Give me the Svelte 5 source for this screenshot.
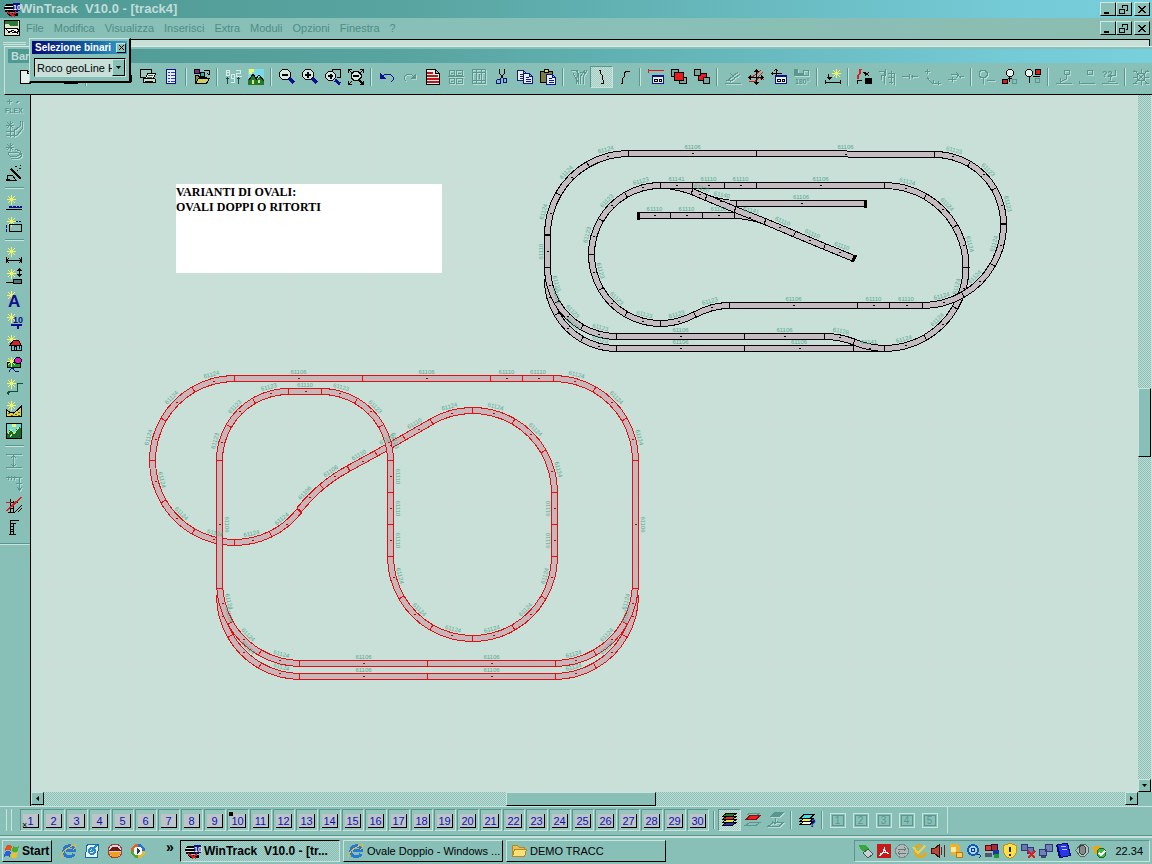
<script lang="ts">
  type Shape = { d?: string; fill: string; stroke?: string; w?: number; text?: string; x?: number; y?: number; size?: number };
  type Piece = { d: string; ticks: string; x: number; y: number; rot: number; label: string };

  const K = "#000";
  const NAVY = "#10108c";
  const PALE = "#e4f0ec";
  const DIM = "#5a968e";

  const s = (stroke: string, d: string, fill = "none", w = 1): Shape => ({ d, fill, stroke, w });
  const f = (fill: string, d: string): Shape => ({ d, fill });
  const t = (text: string, x: number, y: number, size: number, fill: string): Shape => ({ text, x, y, size, fill });

  const star = s("#f4f468", "M5.5 0v10M1 4.5h9M2 1l7 7M9 1l-7 7");
  const lens = [s(NAVY, "M10 9l5 5", "none", 3), s(K, "M3.500 .5h5l3 3v4l-3 3h-5l-3-3v-4z", "#d4e8e4", 1)];
  const page = (x: number, y: number, c = K) => s(c, `M${x + 0.5} ${y + 0.5}h6l3 3v7h-9zM${x + 6.5} ${y + 0.5}v3h3M${x + 2.5} ${y + 4.5}h3M${x + 2.5} ${y + 6.5}h5M${x + 2.5} ${y + 8.5}h5`, PALE);

  const icons: Record<string, Shape[]> = {
    blank: [s(K, "M3.5 1.500h7l3 3v10h-10zM10.500 1.500v3h3", PALE)],
    open: [s(K, "M1.500 4.500h5l1 2h6v7h-12z", "#a8a848")],
    save: [s(K, "M1.500 1.500h13v13h-13z", "#788838"), f(PALE, "M4 2h8v6H4z")],
    print: [s(K, "M4.500 6.500l1-5h8l-1 5M1.500 6.500h13v6h-13z", PALE), f(K, "M2 12h12v2H2z")],
    preview: [s(K, "M.5 .5h11v8H.5z", "#98c8c0"), s(K, "M5.500 9.500l2-5h8l-2 5z", PALE), s(K, "M3.500 9.500h11l1 1v3h-12z", "#c8e0d8"), s("#405850", "M8 6.500h5M7 8.500h5"), f(K, "M5 12h8v1H5z"), f("#e8e860", "M12 11h2v1h-2z")],
    list: [s(NAVY, "M3.500 .5h9v14h-9z", PALE, 1), s("#2838c8", "M5 3.500h2M8 3.500h4M5 6.500h2M8 6.500h4M5 9.500h2M8 9.500h4M5 12.500h2M8 12.500h4")],
    modules: [s(K, "M.5 .5h5v4h-5z", "#882080"), s(K, "M6.500 3.500h4v4h-4z", "#20b8b8"), s(K, "M10 1.500h5v4M13 4l2 2"), s(K, "M1.500 14.500v-8h3l1 2h7v2", "#909038"), s(K, "M1.500 14.500l3-5h11l-3 5z", "#d0d060")],
    tracks: [s("#d8ece8", "M1.500 1v5M4.500 1v5M1 1.500h4M1 3.500h4M1 6.500h4M11 1.500h5M15.500 1v3h-4v3h5", "none", 1), s("#204848", "M2.500 15V9M.5 10.500l2-2 2 2M13.500 15V9M11.500 10.500l2-2 2 2"), s("#d8ece8", "M6.500 5.500h3v8M6.500 5v4h3M6 13.500h3")],
    photo: [f("#78dce8", "M0 0h16v10H0z"), f("#f4f468", "M1 0h5v3H4v2H1z"), f("#207830", "M0 11l5-6 4 5 3-3 4 4v5H0z"), s(K, "M1 11l4-6 4 6M8 10l3-4 5 6"), f("#d8e870", "M4 11h2v4H4zM10 11h2v3h-2z")],
    zoomOut: [...lens, s(K, "M3 5.500h6", "none", 2)],
    zoomIn: [...lens, s(K, "M3 6h6M6 3v6", "none", 2)],
    zoomBox: [s(K, "M7.500 2V.5h8v8H12"), s(NAVY, "M10 11l5 4", "none", 3), s(K, "M3.500 2.500h4l3 3v3l-3 3h-4l-3-3v-3z", "#d4e8e4"), s(K, "M3 7h5M5.500 4.500v5", "none", 2)],
    zoomAll: [s(K, "M.5 4V.5H4M12 .5h3.500V4M.5 12v3.500H4M12 15.500h3.500V12M1 1l3 3M15 1l-3 3M1 15l3-3"), s(K, "M6 2.500h4l3 3v3l-3 3H6l-3-3v-3z", "#d4e8e4"), s(K, "M5 7h6M11 11l4 4", "none", 2)],
    undo: [s(NAVY, "M3 8l3-3h5l3 3v3l-2 2"), f(NAVY, "M1 4v6h6z")],
    redo: [s(DIM, "M12 8L9 5H5L2 8v2l2 2"), f(DIM, "M14 4v6H8z")],
    redDoc: [s(K, "M1.500 .5h9l4 4v11h-13zM10.500 .5v4h4", PALE), s("#c01818", "M2 4h6M2 7h11M2 10h12M2 13h12", "none", 2)],
    gridDoc: [s(DIM, "M1.500 1.500h5v5h-5zM8.500 1.500h6v5h-6zM1.500 9.500h5v5h-5zM8.500 9.500h6v5h-6zM0 7.500h16M3 4h2M10 4h3M3 12h2M10 12h3")],
    colDoc: [s(DIM, "M1.500 .5h13v14h-13zM2 3.500h12M2 11.500h12M5.500 1v14M10.500 1v14M8 5v5")],
    cut: [s(K, "M5.500 0v4l4 6M10.500 0v4l-4 6"), s(NAVY, "M3.500 10.500h3v4h-4v-3zM9.500 9.500h3v4h-3z", "none", 1)],
    copy: [page(0, 1, "#202060"), page(6, 4, NAVY)],
    paste: [s(K, "M.5 2.500h12v11H.5z", "#7c7c40"), s(K, "M4.500 .5h4v3h-4z", "#d8d870"), page(6, 5, NAVY)],
    fork: [s(DIM, "M0 1.500h5l2 3v10M2 4l5 9M7 1l-2 14M9 15V8l5-7M12 15V8l4-7M9 3h5")],
    bendLeft: [s(K, "M5 1.500h2M6.500 2v2l2 3v3l1 2v2.500M7 14.500h3")],
    bendRight: [s(K, "M4 14.500h2M5.500 14v-4l2-3V4l2-2h3")],
    trackWin: [s("#e01818", "M0 1.500h16M.5 0v4", "none", 1), s(NAVY, "M4.500 6.500h11v8h-11z", PALE), f(NAVY, "M4 6h12v2H4z"), s(K, "M6.500 10.500h3v2h-3zM11.500 10.500h2v2h-2z")],
    front: [s(K, "M.5 .5h7v7h-7z", "#78a8a0"), s(K, "M8.500 8.500h7v6h-7z", "#78a8a0"), s(K, "M3.500 3.500h9v8h-9z", "#f01818")],
    back: [s(K, "M4.500 4.500h8v7h-8z", "#f01818"), s(K, "M.5 .5h6v6h-6z", "#78a8a0"), s(K, "M9.500 8.500h6v6h-6z", "#78a8a0")],
    slope: [s(DIM, "M0 14.500h16M2 12l11-9M5 13l10-8M5 4l5 5M1 11h5")],
    moveTrack: [s("#e01818", "M1 7.500h4l8-6M1 12.500h6l4-4 5 2M9 9l6-6"), s(K, "M8.500 0v16M0 8.500h16"), f(K, "M6 3l2.500-3L11 3zM6 13l2.500 3 2.500-3zM3 6L0 8.500 3 11zM13 6l3 2.500L13 11z")],
    moveWin: [s(K, "M5.500 0v8M0 4.500h11M3 2l2-2 2 2M2 3L.5 4.500 2 6"), s(NAVY, "M4.500 6.500h11v8h-11z", PALE), f(NAVY, "M4 6h12v2H4z"), s(K, "M6.500 10.500h3v2h-3zM11.500 10.500h2v2h-2z")],
    rotate: [f(DIM, "M0 0h4v4h5v3H0z"), s(DIM, "M9.500 1.500h5v5h-5z"), t("180°", 1, 15, 7, DIM)],
    drop: [s(K, "M0 13.500h16M.5 11v4M15.500 11v4M3.500 5v4"), f(K, "M1 8h6l-3 3z"), s("#f4f468", "M11.500 0v9M7 4.500h9M8 1l7 7M15 1l-7 7")],
    redSwitch: [s("#e01818", "M1.500 10V7l2-3V1M3 .5h3"), s("#e01818", "M2.500 10V7l2-3V1"), s(K, "M1.500 15v-4h4M7 3l4 3M9 3l4 4M13 3L9 7"), f(K, "M9 9h7v6H9z")],
    switchOff: [s(DIM, "M0 2.500h5v4H2v4M7 0L5 15M9 4.500h6v11M9 8h6M10 13h4M12.500 2v13")],
    joint: [s(DIM, "M0 7.500h7M7.500 5v5M9 7.500h7M10.500 6v3")],
    chain: [s(DIM, "M2.500 0v5M0 2.500h5M2 8l2 3 3 3h9M8 11v4M13 12v4")],
    split: [s(DIM, "M0 10.500h8M4 8v5M3 5.500h6l4 3M8 3l3 3-3 3M12 7.500h4")],
    lamp: [s(DIM, "M2 1.500h4l2 2v3L6 8.500H2l-2-2v-3zM4.500 9v6M8 11.500h8")],
    lampA: [s(K, "M6.500 .5h3l2 2v3l-2 2h-3l-2-2v-3zM7.500 8v5", PALE), s(K, "M6 9.500h4"), s(K, "M.5 10.500h5v4h-5z", "#e01818"), s(DIM, "M10.500 10.500h4v4h-4z")],
    lampB: [s(K, "M2.500 .5h3l2 2v3l-2 2h-3l-2-2v-3zM4.500 8v6", PALE), s(K, "M8 7.500h7", "none"), s(K, "M10.500 .5h5v5h-5z", "#e01818"), s(DIM, "M10.500 9.500h4v4h-4z")],
    signal: [s(DIM, "M0 14.500h16M8.500 1.500h5v4h-5zM10 6v4l-6 3M4 9v5h5")],
    signalB: [s(DIM, "M0 14.500h16M8.500 1.500h5v4h-5zM.5 12v3")],
    ask: [t("?2", 0, 8, 9, DIM), s(DIM, "M0 14.500h16M13.500 1v5h-5v5M6 12h7")],
    target: [s(DIM, "M1 1l14 14M15 1L1 15M4.500 4.500h7v7h-7zM8 0v4M8 12v4M0 8h4M12 8h4M0 2h4M12 2h4M0 14h4M12 14h4")],
    flex: [s(DIM, "M3.500 0v5M1 2.500h5M10 4l3-2"), t("FLEX", -1, 14, 7, DIM)],
    bendTool: [s(DIM, "M4 0v8M0 4h8M1 1l6 6M7 1L1 7M0 10h8l6-5V0M0 14h11l5-6V0M4 8v8M8 8v8")],
    spiral: [s(DIM, "M4 0v8M0 4h8M1 1l6 6M7 1L1 7M3 9h8l4 2-4 2H4l-2-2zM5 15h8l3-2-2-5-5-2")],
    wand: [s(K, "M5 4l10 10", "none", 2), s(K, "M2 10l5 1 3 4H1zM9 1h2M13 3h2M11 5h1M14 0h1M0 14h4")],
    newTrack: [star, s(NAVY, "M3 11.500h13", "none", 2), s("#88c0b8", "M6.500 10v2M10.500 10v2M13.500 10v2"), s(K, "M0 14.500h16")],
    newBox: [star, s(K, "M3.500 7.500h12v7h-12z"), s(NAVY, "M10 4.500h2M13 4.500h2M.5 8v3M.5 12v3")],
    newDim: [star, s(K, "M.5 10v6M15.500 10v6M1 13.500h14M3 11l-2 2.500L3 16M13 11l2 2.500-2 2.500")],
    newHeight: [star, s(K, "M13.500 0v7M11.500 2l2-2 2 2M11.500 5l2 2 2-2M0 13.500h7"), s(K, "M7.500 10.500h8v4h-8z", "#507870")],
    newText: [star, { ...t("A", 2, 16, 17, NAVY) }],
    newNumber: [star, t("10", 7, 10, 9, NAVY), s(NAVY, "M5 11.500h11M11.500 11v5", "none", 2)],
    newHouse: [star, f("#60c8d8", "M5 10h10v5H5z"), s(K, "M5.500 10v5h10v-5M8 15v-4h2v4M13 11v3"), s(K, "M3.500 10.500l4-5h5l3 5z", "#e02020")],
    newTree: [s(K, "M1.500 5.500h13v5h-13z", "#189830"), star, s(K, "M10.500 .5h3l2 2v2l-2 2h-3l-2-2v-2z", "#d820c0"), s(NAVY, "M3 15l3-5 3 4h4")],
    newPath: [star, s("#105030", "M2.500 15v-3h9V4h5M1 13l1.500 2L4 13", "none", 1)],
    newHill: [star, s(K, "M.5 15.500V9l3 2 4 1 4-3 4-4v10.500z", "#e0d050"), s("#606018", "M2 12h2M5 14h2M9 13h2M12 11h2M12 14h2")],
    picture: [s(K, "M.5 .5h15v15H.5z", "#70d8d8"), f("#f4f468", "M6 1h4v3H6z"), f("#186830", "M1 11l4-6 3 5 5-7 2 3v9H1z"), s("#c8e870", "M2 11l3-5 3 5M8 11l5-7M4 14l2-3")],
    vDim: [s(DIM, "M0 1.500h16M0 14.500h16M7.500 3v10M5 5l2.500-2L10 5M5 11l2.500 2 2.500-2")],
    railDim: [s(DIM, "M0 2.500h16M2 1v4M5 1v4M8 1v4M13.500 3v11M11 12l2.500 3 2.500-3M10 8h6")],
    noPillar: [s(K, "M4.500 2v13M7.500 4v11M4 5.500h8M4 8.500h3M4 11.500h3M2 15.500h7M9 15l7-7M12 15l4-4"), s("#e01818", "M0 14L15 0M1 14L16 0M0 5h5", "none")],
    pillar: [s(K, "M4.500 1v14M7.500 4v11M4 1.500h9M4 4.500h6M3 15.500h7M4 7.500h3M4 10.500h3M4 12.500h3", "none", 1)],
    layers: [s(K, "M1 13l4-3h10l-4 3z", "#2030c0"), s(K, "M1 10l4-3h10l-4 3z", "#e8e050"), s(K, "M1 7l4-3h10l-4 3z", "#e03020"), s(K, "M1 4l4-3h10l-4 3z", "#208030")],
    redLayer: [s(DIM, "M0 13.500h11l4-3H5zM2 3l3-2h10l-3 2"), s("#881010", "M1 7.500l4-4h10l-4 4z", "#f02020")],
    dimLayer: [f(DIM, "M1 5l5-5h10l-4 5z"), s(DIM, "M7 6v5M4 9l3 3 3-3M0 14.500h11l4-4H5z")],
    askLayer: [s(K, "M1 12.500l4-3h9l-3 3z", "#f8f8f0"), s(K, "M1 9.500l4-3h9l-3 3z", "#f0f040"), s(K, "M1 6.500l4-4h10l-4 4z", "#40e0e8"), t("?", 10, 15, 11, NAVY)],
    app: [f(K, "M2 3h13v2H1zM0 6h15v2H0zM1 9h13v2H1zM3 12h11v3H5z"), s(PALE, "M1 5.500h8M1 8.500h8"), f(NAVY, "M9 2h7v8H9z"), t("10", 9, 9, 7, "#fff"), s("#e01818", "M3 11l8 4M7 15l5-4", "none", 2)],
    doc: [s(K, "M.5 .5h15v15H.5z", "#dce8c8"), f("#287838", "M1 1h13v5H7L4 4H1z"), s(K, "M2 8h11l2 3-3 2-8-2-3-3M4 13l5-3 5 4", "#fff")],
    flag: [f("#e85020", "M1 3q3-2 6 0L6 8q-3-2-6 0z"), f("#48b028", "M8 3q3 2 6 0l-1 5q-3 2-6 0z"), f("#2860d8", "M0 9q3-2 6 0l-1 5q-3-2-6 0z"), f("#f0c020", "M7 9q3 2 6 0l-1 5q-3 2-6 0z")],
    ie: [s("#2878d0", "M13 11a5.500 5.500 0 1 1 .5-4H5", "none", 3), s("#f0b828", "M1 15q-2-5 6-10t8-2q0 2-3 4", "none", 1)],
    desk: [s("#1868a8", "M3.500 1.500h11l-1 13h-12l1-11z", "#e8f4f8", 1), s("#2888c8", "M5 8a3 3 0 1 0 6 0a3 3 0 1 0-6 0M7 9l6-7", "none", 2)],
    fire: [s("#a04030", "M1 8a7 7 0 1 1 14 0a7 7 0 1 1-14 0z", "#c8d8f0"), f("#781808", "M2 8q6-9 12 0z"), f("#f0a020", "M2 9h12q-1 5-6 5T2 9z")],
    media: [f("#e86020", "M8 1A7 7 0 0 0 1 8h7z"), f("#50a830", "M8 15A7 7 0 0 1 1 8h7z"), f("#f0b828", "M8 15A7 7 0 0 0 15 8H8z"), f("#2870d0", "M8 1a7 7 0 0 1 7 7H8z"), f("#f8f8f8", "M8 3.500a4.500 4.500 0 1 0 .1 0z"), f("#183868", "M7 5l4 3-4 3z")],
    folder: [s("#b88820", "M1.500 13.500v-11h5l2 2h5v3", "#e8c050"), s("#b88820", "M1.500 13.500l2-7h12l-2 7z", "#f8e078")],
    usb: [f("#38a838", "M1 2h6l4 4-3 4-6-4z"), s("#405850", "M5 10l5-4 5 5-5 4z", "#c8d0d0")],
    acrobat: [f("#c81818", "M1 1h14v14H1z"), s("#fff", "M3 13q6-3 5-10M4 11q5-3 9 0M8 5q1 4 5 6")],
    sync: [s("#788888", "M1.500 8a6.500 6.500 0 1 1 13 0a6.500 6.500 0 1 1-13 0z", "#b0b8b8"), s("#687878", "M4 6h7M5 10h7M10 4l2 2-2 2M6 8l-2 2 2 2")],
    ring: [s("#e8a818", "M9 2.500a5.500 5.500 0 1 0 5 7", "none", 3), s("#f0d040", "M1 4l5 6 7-7", "none", 2)],
    sound: [s("#401008", "M1.500 5.500h3l5-4v13l-5-4h-3z", "#b84838"), s("#702018", "M11.500 4v8M14.500 2v12")],
    key: [f("#f0b028", "M2 1h8l2 3v8H3z"), f("#f8e8a8", "M3 4h5v5H3z"), s("#c07810", "M8 9h6v5H8z", "#f0d060")],
    at: [s("#1858b8", "M2 7a5 5 0 1 1 10 0a5 5 0 1 1-10 0z", "#a8d8f0", 2), s("#103888", "M5 7a2 2 0 1 0 4 0a2 2 0 1 0-4 0M11 11q3 0 4 2l-2 2")],
    netRed: [s("#600808", "M1.500 2.500h6v5h-6z", "#d83838"), s("#201040", "M7.500 1.500h6v6h-6z", "#b02828"), f("#1838a8", "M9 7h6v5H9z"), f("#209838", "M10 11h5v4h-5z"), f("#505870", "M1 10h7v4H1z")],
    shield: [s("#c89010", "M8 .5l6.500 2v6q-1 5-6.500 7-5.500-2-6.500-7v-6z", "#f8e048"), s("#302000", "M8 4v5M8 11v2", "none", 2)],
    netOff: [s("#303878", "M1.500 1.500h6v6h-6zM7.500 4.500h6v6h-6z", "#6878b0"), s("#e02020", "M8 8l7 7M15 8l-7 7", "none", 2)],
    net: [s("#303878", "M7.500 1.500h7v7h-7zM1.500 6.500h7v6h-7z", "#7080b8"), f("#404868", "M3 13h5v2H3z")],
    tablet: [s("#080868", "M1.500 1.500l10-1 3 12-10 2z", "#2838e8"), f("#080868", "M0 2h2l3 13H3z"), s("#b0c0ff", "M5 4l5-1M6 7l5-1")],
    volume: [s("#586464", "M1.500 7.500l5-6h5l3 3v5l-4 4h-4z", "#b8c0c0"), s("#384040", "M6 7a3 3 0 1 0 5 0a3 3 0 1 0-5 0", "#808c8c")],
    check: [f("#e8a818", "M1 3h6l5 5-3 6-7-4z"), s("#186820", "M5 10a4.500 4.500 0 1 1 9 0a4.500 4.500 0 1 1-9 0z", "#40b848"), s("#fff", "M7 10l2 2 4-4", "none", 2)],
  };

  const off = new Set(["redo", "gridDoc", "colDoc", "fork", "slope", "rotate", "switchOff", "joint", "chain", "split", "lamp", "signal", "signalB", "ask", "target", "flex", "bendTool", "spiral", "vDim", "railDim", "dimLayer"]);

  const toolbar = "blank open save | x1 print preview list | modules | tracks photo | zoomOut zoomIn zoomBox zoomAll | undo redo redDoc gridDoc colDoc cut copy paste | fork bendLeft bendRight | trackWin front back | slope moveTrack moveWin rotate | drop | redSwitch switchOff joint chain split | lamp lampA lampB | signal signalB ask | target".split(" ");
  const sidebar = "flex bendTool spiral wand | newTrack newBox | newDim newHeight newText newNumber newHouse newTree newPath newHill picture | vDim railDim noPillar pillar".split(" ");
  const tray = "usb acrobat sync ring sound key at netRed shield netOff net tablet volume check".split(" ");
  const menus = ["File", "Modifica", "Visualizza", "Inserisci", "Extra", "Moduli", "Opzioni", "Finestra", "?"];
  const layerNumbers = Array.from({ length: 30 }, (_, i) => i + 1);

  // Track pieces: every piece keeps its path, end joints and label anchor.
  const joint = (x: number, y: number, a: number) => {
    const nx = -Math.sin(a) * 3.5;
    const ny = Math.cos(a) * 3.5;
    return `M${x - nx} ${y - ny}L${x + nx} ${y + ny}`;
  };

  const upright = (a: number) => {
    let deg = (a * 180) / Math.PI;
    while (deg > 90) deg -= 180;
    while (deg <= -90) deg += 180;
    return Math.round(deg);
  };

  function line(x1: number, y1: number, x2: number, y2: number, label = ""): Piece[] {
    const a = Math.atan2(y2 - y1, x2 - x1);
    return [{
      d: `M${x1} ${y1}L${x2} ${y2}`,
      ticks: joint(x1, y1, a) + joint(x2, y2, a),
      x: (x1 + x2) / 2, y: (y1 + y2) / 2, rot: upright(a), label,
    }];
  }

  function arc(cx: number, cy: number, r: number, from: number, to: number, n: number, label: string): Piece[] {
    const at = (deg: number) => [cx + r * Math.cos((deg * Math.PI) / 180), cy + r * Math.sin((deg * Math.PI) / 180)];
    const step = (to - from) / n;
    return Array.from({ length: n }, (_, i) => {
      const a = from + i * step;
      const [x1, y1] = at(a);
      const [x2, y2] = at(a + step);
      const [x, y] = at(a + step / 2);
      const rad = (deg: number) => ((deg + 90) * Math.PI) / 180;
      return {
        d: `M${x1} ${y1}A${r} ${r} 0 0 ${step > 0 ? 1 : 0} ${x2} ${y2}`,
        ticks: joint(x1, y1, rad(a)) + joint(x2, y2, rad(a + step)),
        x, y, rot: upright(rad(a + step / 2)), label,
      };
    });
  }

  function bend(x1: number, y1: number, qx: number, qy: number, x2: number, y2: number, label = ""): Piece[] {
    const p = line(x1, y1, x2, y2, label)[0];
    p.d = `M${x1} ${y1}Q${qx} ${qy} ${x2} ${y2}`;
    p.x = (x1 + 2 * qx + x2) / 4;
    p.y = (y1 + 2 * qy + y2) / 4;
    return [p];
  }

  // Vertical pieces whose label reads bottom to top.
  const leftward = (pieces: Piece[]) => pieces.map((p) => ({ ...p, rot: -90 }));

  const blackLayout = [
    ...arc(616.5, 279.5, 69, 180, 90, 3, "61123"),
    ...arc(616.5, 267.5, 69, 180, 90, 3, "61123"),
    ...arc(628.5, 234.5, 81, 180, 270, 3, "61124"),
    ...line(628.5, 153.5, 756.5, 153.5, "61106"),
    ...line(756.5, 153.5, 934.5, 154.5, "61106"),
    ...arc(934.5, 223.5, 69, -90, 0, 3, "61123"),
    ...arc(884.5, 267, 81.5, -90, 90, 6, "61124"),
    ...arc(922.5, 224.5, 81, 0, 90, 3, "61124"),
    ...leftward(line(547.5, 267.5, 547.5, 235.5, "61110")),
    ...line(616.5, 336.5, 744.5, 336.5, "61106"),
    ...line(744.5, 336.5, 824.5, 336.5, "61106"),
    ...line(616.5, 348.5, 744.5, 348.5, "61106"),
    ...line(744.5, 348.5, 853.5, 348.5, "61106"),
    ...line(853.5, 348.5, 884.5, 348.5, "61141"),
    ...bend(824.5, 336.5, 840, 336.5, 854, 342, "61128"),
    ...bend(854, 342, 868, 348, 884.5, 348.5),
    ...arc(660.5, 254.5, 69, 60, 270, 7, "61123"),
    ...arc(729.5, 374.5, 69, -120, -90, 1, "61123"),
    ...line(729.5, 305.5, 857.5, 305.5, "61106"),
    ...line(857.5, 305.5, 889.5, 305.5, "61110"),
    ...line(889.5, 305.5, 922.5, 305.5, "61110"),
    ...bend(667, 185.5, 680, 187, 692, 191.5),
    ...line(660.5, 185.5, 692.5, 185.5, "61141"),
    ...line(692.5, 185.5, 724.5, 185.5, "61110"),
    ...line(724.5, 185.5, 756.5, 185.5, "61110"),
    ...line(756.5, 185.5, 884.5, 185.5, "61106"),
    ...line(692, 191.5, 706, 197.5, "61120"),
    ...bend(706, 197.5, 720, 203, 736.5, 203.5, "61140"),
    ...line(736.5, 203.5, 865.5, 203.5, "61106"),
    ...line(638.5, 215.5, 670.5, 215.5, "61110"),
    ...line(670.5, 215.5, 702.5, 215.5, "61110"),
    ...line(702.5, 215.5, 734.5, 215.5, "61110"),
    ...bend(734.5, 215.5, 750, 216, 765, 221.5, "61141"),
    ...line(706, 197.5, 735, 209.5),
    ...line(735, 209.5, 765, 221.5),
    ...line(765, 221.5, 794.5, 234, "61110"),
    ...line(794.5, 234, 824.5, 246.5, "61110"),
    ...line(824.5, 246.5, 854, 258.5, "61110"),
  ];

  const redLayout = [
    ...arc(234.5, 460.5, 82, 38, 90, 2, "61124"),
    ...arc(234.5, 460.5, 82, 90, 270, 6, "61124"),
    ...arc(421, 605, 154.5, -142, -118, 2, "61106"),
    ...line(348.5, 468.5, 376, 453.5, "61110"),
    ...line(376, 453.5, 404, 437.5, "61110"),
    ...line(404, 437.5, 432, 421.5, "61110"),
    ...arc(472.5, 492.5, 82, -120, 0, 4, "61124"),
    ...leftward(line(554.5, 492.5, 554.5, 524.5, "61110")),
    ...leftward(line(554.5, 524.5, 554.5, 556.5, "61110")),
    ...arc(472.5, 556.5, 82, 0, 180, 6, "61124"),
    ...line(390.5, 460.5, 390.5, 492.5, "61110"),
    ...line(390.5, 492.5, 390.5, 524.5, "61110"),
    ...line(390.5, 524.5, 390.5, 556.5, "61110"),
    ...arc(321.5, 460.5, 69, -90, 0, 3, "61123"),
    ...line(288.5, 391.5, 321.5, 391.5, "61110"),
    ...arc(288.5, 460.5, 69, 180, 270, 3, "61123"),
    ...line(234.5, 378.5, 362.5, 378.5, "61106"),
    ...line(362.5, 378.5, 490.5, 378.5, "61106"),
    ...line(490.5, 378.5, 522.5, 378.5, "61110"),
    ...line(522.5, 378.5, 553.5, 378.5, "61110"),
    ...arc(553.5, 460.5, 82, -90, 0, 3, "61124"),
    ...arc(300.5, 595.5, 81, 90, 180, 3, "61124"),
    ...arc(300.5, 582.5, 81, 90, 180, 3, "61124"),
    ...arc(554.5, 595.5, 81, 0, 90, 3, "61124"),
    ...arc(554.5, 582.5, 81, 0, 90, 3, "61124"),
    ...line(219.5, 460.5, 219.5, 588.5, "61106"),
    ...line(635.5, 460.5, 635.5, 588.5, "61106"),
    ...line(299.5, 663.5, 427.5, 663.5, "61106"),
    ...line(427.5, 663.5, 555.5, 663.5, "61106"),
    ...line(299.5, 676.5, 427.5, 676.5, "61106"),
    ...line(427.5, 676.5, 555.5, 676.5, "61106"),
  ];

  const layouts = [
    { name: "black", pieces: blackLayout },
    { name: "red", pieces: redLayout },
  ];

  let activeLayer = $state(10);
</script>

{#snippet icon(name: string)}
  <svg class={["icon", off.has(name) && "off"]} viewBox="0 0 16 16" aria-hidden="true">
    {#each icons[name] ?? [] as shape}
      {#if shape.text}
        <text x={shape.x} y={shape.y} font-size={shape.size} fill={shape.fill}>{shape.text}</text>
      {:else}
        <path d={shape.d} fill={shape.fill} stroke={shape.stroke ?? "none"} stroke-width={shape.w ?? 1} />
      {/if}
    {/each}
  </svg>
{/snippet}

{#snippet windowButtons()}
  <div class="window-buttons">
    <button aria-label="Riduci"><svg viewBox="0 0 11 9"><path d="M2 8h5" stroke-width="2" /></svg></button>
    <button aria-label="Ripristina"><svg viewBox="0 0 11 9"><path d="M4 .5h5M4.500 0v3M9.500 0v5.500H8M2 4h5M1.500 3.500v5h5v-5" /></svg></button>
    <button class="close" aria-label="Chiudi"><svg viewBox="0 0 11 9"><path d="M2 1l7 7M9 1L2 8M3 1l7 7M10 1L3 8" /></svg></button>
  </div>
{/snippet}

<div class="app">
  <header class="titlebar">
    {@render icon("app")}
    <h1>WinTrack&nbsp; V10.0 - [track4]</h1>
    {@render windowButtons()}
  </header>

  <nav class="menubar">
    {@render icon("doc")}
    {#each menus as menu}
      <button>{menu}</button>
    {/each}
    {@render windowButtons()}
  </nav>

  <div class="dock">
    <span class="dock-grip"></span>
    <span class="dock-strip"></span>
  </div>

  <section class="toolbar">
    <div class="toolbar-title">Barra</div>
    <div class="tools">
      {#each toolbar as name}
        {#if name === "|"}
          <span class="sep"></span>
        {:else}
          <button class={["tool", name === "bendLeft" && "pressed"]} aria-label={name}>{@render icon(name)}</button>
        {/if}
      {/each}
    </div>
  </section>

  <main>
    <aside class="sidebar">
      {#each sidebar as name}
        {#if name === "|"}
          <span class="hsep"></span>
        {:else}
          <button aria-label={name}>{@render icon(name)}</button>
        {/if}
      {/each}
      <span class="side-end"></span>
    </aside>

    <div class="workspace">
      <div class="view">
        <svg class="plan" role="img" aria-label="track4">
          <defs>
            <pattern id="grid" width="80" height="80" patternUnits="userSpaceOnUse" x="53" y="104">
              <path d="M0 .5h80M.5 0v80" stroke="#d2dad4" fill="none" />
            </pattern>
          </defs>
          <g transform="translate(-31 -95)">
            <rect x="31" y="95" width="100%" height="100%" fill="url(#grid)" />
            <rect x="176" y="184" width="266" height="89" fill="#fff" />
            <text class="note" x="176" y="196">VARIANTI DI OVALI:</text>
            <text class="note" x="176" y="211">OVALI DOPPI O RITORTI</text>
            {#each layouts as layout}
              <g class={["layout", layout.name]}>
                {#each layout.pieces as piece}
                  <path class="rail" d={piece.d} />
                  <path class="bed" d={piece.d} />
                  <path class="joint" d={piece.ticks} />
                {/each}
                {#each layout.pieces as piece}
                  {#if piece.label}
                    <rect class="dot" x={Math.floor(piece.x)} y={Math.floor(piece.y)} width="2" height="1" />
                    <text class="label" text-anchor="middle" transform="translate({piece.x} {piece.y}) rotate({piece.rot})" y="-5">{piece.label}</text>
                  {/if}
                {/each}
              </g>
            {/each}
            <path class="buffer" d="M638 212v8M865 200v8M856 255l-4 7" />
          </g>
        </svg>
        <div class="scroll-v">
          <span class="before"></span>
          <span class="thumb"></span>
          <span class="after"></span>
          <button aria-label="Scorri in basso"><svg viewBox="0 0 7 7"><path d="M1 2h5L3.500 5z" /></svg></button>
        </div>
      </div>
      <div class="scroll-h">
        <button aria-label="Scorri a sinistra"><svg viewBox="0 0 7 7"><path d="M5 1v5L2 3.500z" /></svg></button>
        <span class="before"></span>
        <span class="thumb"></span>
        <span class="after"></span>
        <button aria-label="Scorri a destra"><svg viewBox="0 0 7 7"><path d="M2 1v5l3-2.500z" /></svg></button>
        <span class="corner"></span>
      </div>
    </div>
  </main>

  <section class="layerbar">
    <span class="grip"></span>
    {#each layerNumbers as n}
      <button class="layer" onclick={() => (activeLayer = n)}>
        <span>{n}</span>
        {#if n === activeLayer}<i class="current"></i>{/if}
        {#if n === 1}<i class="crossed">×</i>{/if}
      </button>
    {/each}
    <span class="sep"></span>
    <button class="tool pressed" aria-label="layers">{@render icon("layers")}</button>
    <button class="tool" aria-label="redLayer">{@render icon("redLayer")}</button>
    <button class="tool" aria-label="dimLayer">{@render icon("dimLayer")}</button>
    <span class="sep"></span>
    <button class="tool" aria-label="askLayer">{@render icon("askLayer")}</button>
    <span class="sep"></span>
    {#each [1, 2, 3, 4, 5] as n}
      <button class="tool"><span class="preset">{n}</span></button>
    {/each}
    <span class="bar-end"></span>
  </section>

  <footer class="taskbar">
    <button class="start">{@render icon("flag")}Start</button>
    <div class="quick">
      {#each ["ie", "desk", "fire", "media"] as name}
        <button aria-label={name}>{@render icon(name)}</button>
      {/each}
    </div>
    <button class="more" aria-label="Altro">»</button>
    <button class="task active">{@render icon("app")}<span>WinTrack&nbsp; V10.0 - [tr...</span></button>
    <button class="task">{@render icon("ie")}<span>Ovale Doppio - Windows ...</span></button>
    <button class="task">{@render icon("folder")}<span>DEMO TRACC</span></button>
    <div class="tray">
      {#each tray as name}
        {@render icon(name)}
      {/each}
      <time>22.34</time>
    </div>
  </footer>

  <div class="palette">
    <div class="palette-title">
      <label for="system">Selezione binari</label>
      <button aria-label="Chiudi selezione"><svg viewBox="0 0 7 7"><path d="M1 1l5 5M6 1L1 6" /></svg></button>
    </div>
    <div class="combo">
      <select id="system"><option>Roco geoLine H0</option></select>
      <span class="arrow"><svg viewBox="0 0 7 7"><path d="M1 2h5L3.500 5z" /></svg></span>
    </div>
  </div>
</div>

<style>
  :global(body) {
    background: #88c0b8;
  }

  .app {
    --face: #88c0b8;
    --light: #c8e4dc;
    --dark: #5a968e;
    --paper: #c8e0d8;
    --title: linear-gradient(90deg, #509a94, #58a4a0 35%, #74cad6 88%, #78d0dc);
    --dither: repeating-conic-gradient(#88c0b8 0 25%, #c0dcd4 0 50%) 0 0 / 2px 2px;
    position: relative;
    display: flex;
    flex-direction: column;
    height: 100vh;
    overflow: hidden;
    background: var(--face);
    font: 11px/14px "Liberation Sans", Arial, sans-serif;
    color: #000;
  }

  button {
    box-sizing: border-box;
    margin: 0;
    padding: 0;
    border: 0;
    background: none;
    color: inherit;
    font: inherit;
  }

  .icon {
    display: block;
    flex: none;
    width: 16px;
    height: 16px;
    overflow: visible;
    shape-rendering: crispEdges;
  }

  .icon text {
    font-family: "Liberation Sans", Arial, sans-serif;
    font-weight: bold;
  }

  .icon.off {
    filter: drop-shadow(1px 1px 0 #b8dcd4);
  }

  .titlebar,
  .menubar {
    display: flex;
    align-items: center;
    flex: none;
    padding: 0 2px 0 4px;
  }

  .titlebar {
    height: 18px;
    background: var(--title);
  }

  .titlebar h1 {
    margin: 0;
    color: #c0dcd8;
    font-size: 13px;
    font-weight: bold;
  }

  .menubar {
    height: 20px;
    background: linear-gradient(90deg, #88c0b8 50%, #8cbcb0);
  }

  .menubar > button {
    margin-left: 10px;
    color: #508c84;
  }

  .menubar > .icon + button {
    margin-left: 6px;
  }

  .window-buttons {
    display: flex;
    margin-left: auto;
  }

  .window-buttons button {
    width: 16px;
    height: 14px;
    padding: 1px;
    border: 1px solid;
    border-color: #d0e8e0 #000 #000 #d0e8e0;
    background: var(--face);
  }

  .window-buttons .close {
    margin-left: 2px;
  }

  .window-buttons svg {
    display: block;
    width: 11px;
    height: 9px;
    fill: none;
    stroke: #000;
    shape-rendering: crispEdges;
  }

  .dock {
    display: flex;
    flex: none;
    align-items: flex-end;
    height: 8px;
    padding-right: 2px;
  }

  .dock-grip {
    width: 23px;
    height: 1px;
    margin: 0 4px 1px 3px;
    border-top: 1px solid var(--light);
    border-bottom: 1px solid var(--light);
  }

  .dock-strip {
    flex: 1;
    height: 6px;
    border-top: 1px solid #000;
    border-right: 1px solid #000;
    background: var(--paper);
  }

  .toolbar {
    box-sizing: border-box;
    flex: none;
    height: 49px;
    margin-left: 4px;
    padding: 2px 0 0 3px;
    border-top: 1px solid #d8ece4;
    border-left: 1px solid var(--light);
    border-bottom: 1px solid #000;
  }

  .toolbar-title {
    height: 14px;
    padding-left: 3px;
    background: var(--title);
    color: #c0dcd8;
    font-weight: bold;
  }

  .tools {
    display: flex;
    align-items: center;
    height: 28px;
    padding-left: 5px;
  }

  .tool {
    display: grid;
    place-items: center;
    flex: none;
    width: 23px;
    height: 22px;
    border: 1px solid transparent;
  }

  .tool.pressed {
    border-color: var(--dark) var(--light) var(--light) var(--dark);
    background: repeating-conic-gradient(#a0ccc4 0 25%, #c8e0d8 0 50%) 0 0 / 2px 2px;
  }

  .sep {
    flex: none;
    box-sizing: border-box;
    width: 2px;
    height: 18px;
    margin: 0 3px;
    border-left: 1px solid var(--dark);
    border-right: 1px solid var(--light);
  }

  main {
    display: flex;
    flex: 1;
    min-height: 0;
  }

  .sidebar {
    display: flex;
    flex-direction: column;
    flex: none;
    width: 30px;
    padding-top: 1px;
  }

  .sidebar button {
    display: grid;
    place-items: center;
    height: 22px;
    padding-right: 2px;
  }

  .hsep,
  .side-end {
    flex: none;
    margin: 3px 6px 3px 5px;
    border-top: 1px solid var(--dark);
    border-bottom: 1px solid var(--light);
  }

  .side-end {
    margin: 5px 0 0;
  }

  .workspace {
    display: flex;
    flex-direction: column;
    flex: 1;
    min-width: 0;
    border-left: 1px solid #000;
  }

  .view {
    display: flex;
    flex: 1;
    min-height: 0;
    background: var(--paper);
  }

  .plan {
    display: block;
    flex: 1;
    min-width: 0;
    height: 100%;
  }

  .note {
    font: bold 12px "Liberation Serif", "Times New Roman", serif;
  }

  .layout path,
  .buffer {
    fill: none;
    shape-rendering: crispEdges;
  }

  .layout .rail {
    stroke-width: 7px;
  }

  .layout .bed {
    stroke: #c4bcc0;
    stroke-width: 5px;
  }

  .black .rail,
  .black .joint {
    stroke: #000;
  }

  .red .rail,
  .red .joint {
    stroke: #e01010;
  }

  .red .bed {
    stroke: #c8b6ba;
  }

  .red .dot {
    fill: #b00808;
  }

  .label {
    fill: #58a890;
    font: 6px "Liberation Sans", Arial, sans-serif;
  }

  .buffer {
    stroke: #000;
    stroke-width: 3px;
  }

  .scroll-v,
  .scroll-h {
    display: flex;
    flex: none;
    background: var(--dither);
  }

  .scroll-v {
    flex-direction: column;
    width: 13px;
    margin-right: 1px;
  }

  .scroll-h {
    height: 14px;
  }

  .scroll-v .before {
    flex: 293;
  }

  .scroll-v .thumb {
    flex: 67;
  }

  .scroll-v .after {
    flex: 322;
  }

  .scroll-h .before {
    flex: 462;
  }

  .scroll-h .thumb {
    flex: 149;
  }

  .scroll-h .after {
    flex: 469;
  }

  .corner {
    width: 14px;
    background: var(--face);
  }

  .thumb,
  .scroll-v button,
  .scroll-h button {
    box-sizing: border-box;
    border: 1px solid;
    border-color: var(--light) #000 #000 var(--light);
    background: var(--face);
  }

  .scroll-v button,
  .scroll-h button {
    display: grid;
    place-items: center;
    width: 13px;
    height: 13px;
  }

  .scroll-v svg,
  .scroll-h svg,
  .arrow svg {
    width: 7px;
    height: 7px;
  }

  .layerbar {
    display: flex;
    align-items: center;
    flex: none;
    box-sizing: border-box;
    height: 30px;
    padding-bottom: 2px;
    border-top: 1px solid var(--light);
    border-bottom: 1px solid var(--dark);
  }

  .grip {
    width: 4px;
    height: 22px;
    margin: 0 8px 0 6px;
    border-left: 1px solid var(--light);
    border-right: 1px solid var(--light);
  }

  .layer {
    position: relative;
    flex: none;
    width: 22px;
    height: 22px;
    margin-right: 1px;
    padding: 3px 2px 2px;
    border: 1px solid;
    border-color: var(--dark) var(--light) var(--light) var(--dark);
    background: #94c6be;
  }

  .layer > span {
    display: block;
    box-sizing: border-box;
    height: 14px;
    border-right: 1px solid #000;
    border-bottom: 1px solid #000;
    background: #bcc4c8;
    color: #1010b8;
    line-height: 14px;
    text-align: center;
  }

  .current {
    position: absolute;
    top: 2px;
    left: 1px;
    width: 4px;
    height: 4px;
    background: #000;
  }

  .crossed {
    position: absolute;
    bottom: 0;
    left: 1px;
    font-style: normal;
    font-size: 9px;
    line-height: 9px;
  }

  .preset {
    width: 10px;
    height: 9px;
    outline: 1px solid var(--light);
    outline-offset: 1px;
    border: 1px solid var(--dark);
    color: var(--dark);
    font-size: 10px;
    line-height: 9px;
    text-align: center;
  }

  .bar-end {
    align-self: stretch;
    margin-left: 6px;
    border-left: 1px solid var(--light);
  }

  .taskbar {
    display: flex;
    align-items: center;
    flex: none;
    box-sizing: border-box;
    height: 28px;
    padding: 0 2px;
    border-top: 2px solid var(--light);
  }

  .start,
  .task {
    display: flex;
    align-items: center;
    height: 22px;
    border: 1px solid;
    border-color: var(--light) #000 #000 var(--light);
    white-space: nowrap;
  }

  .start {
    flex: none;
    width: 50px;
    padding-left: 2px;
    gap: 1px;
    font-size: 12px;
    font-weight: bold;
  }

  .quick {
    display: flex;
    flex: none;
    gap: 7px;
    margin-left: 9px;
  }

  .more {
    flex: none;
    width: 20px;
    margin: 0 0 8px 14px;
    font-size: 14px;
    font-weight: bold;
  }

  .task {
    flex: 0 1 160px;
    min-width: 0;
    margin-right: 3px;
    padding: 0 4px;
    gap: 3px;
    overflow: hidden;
  }

  .task.active {
    border-color: #000 var(--light) var(--light) #000;
    background: repeating-conic-gradient(#88c0b8 0 25%, #a8d0c8 0 50%) 0 0 / 2px 2px;
    font-size: 12px;
    font-weight: bold;
  }

  .tray {
    display: flex;
    align-items: center;
    flex: none;
    gap: 2px;
    height: 20px;
    margin-left: auto;
    padding: 0 6px 0 3px;
    border: 1px solid;
    border-color: var(--dark) var(--light) var(--light) var(--dark);
  }

  .tray time {
    margin-left: 5px;
  }

  .palette {
    position: absolute;
    top: 38px;
    left: 29px;
    box-sizing: border-box;
    width: 102px;
    height: 45px;
    padding: 2px;
    border: 1px solid;
    border-color: var(--light) #000 #000 var(--light);
    border-right-width: 2px;
    border-bottom-width: 2px;
    background: var(--face);
  }

  .palette-title {
    display: flex;
    align-items: center;
    height: 13px;
    padding-left: 3px;
    background: linear-gradient(90deg, #080878, #1060a0 60%, #38a0c8);
    color: #fff;
    font-size: 10px;
    font-weight: bold;
    white-space: nowrap;
  }

  .palette-title label {
    flex: 1;
    min-width: 0;
    overflow: hidden;
  }

  .palette-title button {
    display: grid;
    place-items: center;
    flex: none;
    width: 10px;
    height: 10px;
    margin-right: 1px;
    border: 1px solid;
    border-color: var(--light) #000 #000 var(--light);
    background: var(--face);
  }

  .palette-title svg {
    width: 7px;
    height: 7px;
    stroke: #000;
  }

  .combo {
    display: flex;
    box-sizing: border-box;
    height: 19px;
    margin: 4px 1px 0 2px;
    border: 1px solid;
    border-color: #000 var(--light) var(--light) #000;
    background: var(--paper);
  }

  .combo select {
    flex: 1;
    min-width: 0;
    padding: 0 0 0 2px;
    border: 0;
    appearance: none;
    background: transparent;
    color: #000;
    font: inherit;
    text-overflow: clip;
  }

  .arrow {
    display: grid;
    place-items: center;
    width: 11px;
    border: 1px solid;
    border-color: var(--light) #000 #000 var(--light);
    background: var(--face);
  }
</style>
